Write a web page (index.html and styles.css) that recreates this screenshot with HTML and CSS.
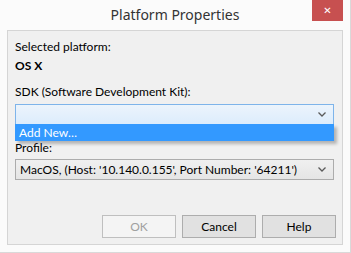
FILE: index.html
```html
<!DOCTYPE html>
<html lang="en">
<head>
    <meta charset="UTF-8">
    <title>Platform Properties</title>
    <link rel="stylesheet" href="styles.css">
</head>
<body>

<div class="window">
    <div class="titlebar">
        <span class="title">Platform Properties</span>
        <button class="close-btn">&#x2715;</button>
    </div>

    <div class="client">
        <div class="label">Selected platform:</div>
        <div class="platform">OS X</div>

        <div class="label sdk-label">SDK (Software Development Kit):</div>
        <div class="combo-wrap">
            <div class="combo combo-open">
                <span class="combo-text"></span>
                <svg class="chevron" width="8" height="5" viewBox="0 0 8 5"><polyline points="0.5,0.5 4,4 7.5,0.5" fill="none" stroke="#5a5a5a" stroke-width="1.3"/></svg>
            </div>
            <!-- open dropdown list -->
            <div class="combo-list">
                <div class="combo-item selected">Add New…</div>
            </div>
        </div>

        <div class="label profile-label">Profile:</div>
        <div class="combo">
            <span class="combo-text">MacOS, (Host: '10.140.0.155', Port Number: '64211')</span>
            <svg class="chevron" width="8" height="5" viewBox="0 0 8 5"><polyline points="0.5,0.5 4,4 7.5,0.5" fill="none" stroke="#5a5a5a" stroke-width="1.3"/></svg>
        </div>

        <div class="buttons">
            <button class="btn" disabled>OK</button>
            <button class="btn">Cancel</button>
            <button class="btn">Help</button>
        </div>
    </div>
</div>

</body>
</html>
```

FILE: styles.css
```css
body {
    margin: 0;
    padding: 0;
    font-family: Lato, "Noto Sans", sans-serif;
    background: #ffffff;
}

.window {
    width: 351px;
    height: 253px;
    box-sizing: border-box;
    background-color: #fbfbfb;
    border-right: 1px solid #d9d9d9;
    border-bottom: 1px solid #d9d9d9;
    display: flex;
    flex-direction: column;
}

.titlebar {
    height: 30px;
    position: relative;
    display: flex;
    justify-content: center;
    align-items: center;
}

.title {
    font-family: "Noto Sans", sans-serif;
    font-size: 14px;
    color: #333;
    margin-top: -1px;
}

.close-btn {
    position: absolute;
    top: 0;
    right: 7px;
    width: 31px;
    height: 21px;
    border: none;
    padding: 0;
    background-color: #c75050;
    color: #ffffff;
    font-size: 10px;
    font-family: "DejaVu Sans", sans-serif;
}

.client {
    margin: 0 7px 0 7px;
    height: 215px;
    box-sizing: border-box;
    border: 1px solid #d5d5d5;
    background-color: #f0f0f0;
    padding: 8px 8px 0 7px;
    font-size: 12px;
    line-height: 16px;
    color: #000;
}

.platform {
    font-weight: bold;
    margin-top: 3px;
}

.sdk-label {
    margin-top: 10px;
}

.combo-wrap {
    position: relative;
    margin-top: 4px;
}

.combo {
    height: 21px;
    box-sizing: border-box;
    border: 1px solid #acacac;
    background: linear-gradient(#f0f0f0, #e5e5e5);
    display: flex;
    align-items: center;
    justify-content: space-between;
    padding: 0 7px 0 4px;
    margin-top: 3px;
}

.combo-open {
    border-color: #7eb4ea;
    background: linear-gradient(#ecf4fc, #dcecfc);
    margin-top: 0;
}

.combo-list {
    position: absolute;
    left: 0;
    right: 0;
    top: 20px;
    background-color: #ffffff;
    border: 1px solid #3399ff;
    box-shadow: 3px 3px 3px rgba(0, 0, 0, 0.25);
}

.combo-item {
    height: 15px;
    line-height: 15px;
    padding-left: 3px;
}

.combo-item.selected {
    background-color: #3399ff;
    color: #ffffff;
}

.profile-label {
    margin-top: 15px;
}

.buttons {
    display: flex;
    justify-content: flex-end;
    gap: 6px;
    margin-top: 35px;
    margin-right: -2px;
}

.btn {
    width: 74px;
    height: 23px;
    box-sizing: border-box;
    border: 1px solid #adadad;
    background-color: #e1e1e1;
    font-family: Lato, "Noto Sans", sans-serif;
    font-size: 12px;
    color: #000;
    padding: 0;
}

.btn:disabled {
    border-color: #bfbfbf;
    background-color: #f4f4f4;
    color: #a0a0a0;
}
```
